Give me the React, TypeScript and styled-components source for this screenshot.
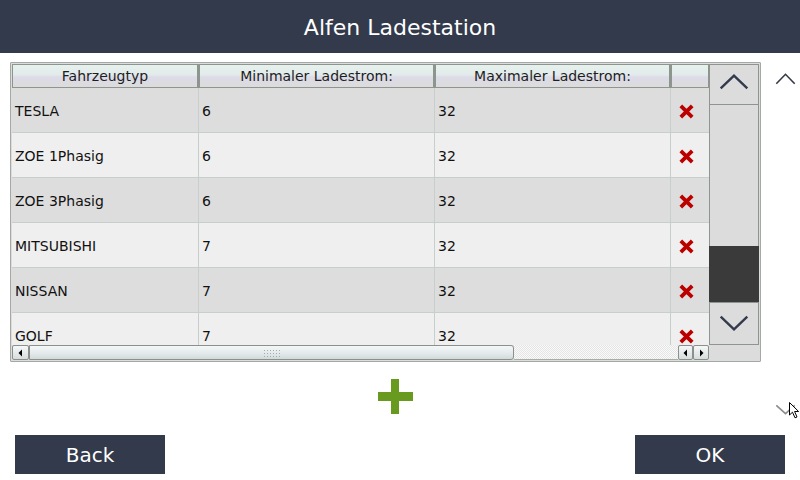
import styled, { createGlobalStyle } from 'styled-components';

type Vehicle = { name: string; min: number; max: number };

const vehicles: Vehicle[] = [
  { name: 'TESLA', min: 6, max: 32 },
  { name: 'ZOE 1Phasig', min: 6, max: 32 },
  { name: 'ZOE 3Phasig', min: 6, max: 32 },
  { name: 'MITSUBISHI', min: 7, max: 32 },
  { name: 'NISSAN', min: 7, max: 32 },
  { name: 'GOLF', min: 7, max: 32 },
];

const GlobalStyle = createGlobalStyle`
  html, body {
    margin: 0;
    padding: 0;
    width: 800px;
    height: 480px;
    overflow: hidden;
    background: #ffffff;
    font-family: 'DejaVu Sans', 'Liberation Sans', sans-serif;
  }
`;

const NAVY = '#323a4b';
const EDGE = '#8e948e';
const GRID_LINE = '#c6cfca';

function Cross() {
  return (
    <svg width="15" height="15" viewBox="0 0 15 15">
      <path d="M1.8 1.8 L13.2 13.2 M13.2 1.8 L1.8 13.2" stroke="#bb0000" strokeWidth="3.8" />
    </svg>
  );
}

function Chevron({ up, w, h, stroke, color }: { up?: boolean; w: number; h: number; stroke: number; color: string }) {
  const p = stroke / 2 + 0.5;
  const d = up
    ? `M${p} ${h - p} L${w / 2} ${p} L${w - p} ${h - p}`
    : `M${p} ${p} L${w / 2} ${h - p} L${w - p} ${p}`;
  return (
    <svg width={w} height={h} viewBox={`0 0 ${w} ${h}`}>
      <path d={d} fill="none" stroke={color} strokeWidth={stroke} />
    </svg>
  );
}

function Triangle({ left }: { left?: boolean }) {
  return (
    <svg width="5" height="8" viewBox="0 0 5 8">
      <path d={left ? 'M4 0.5 L0.5 4 L4 7.5 Z' : 'M1 0.5 L4.5 4 L1 7.5 Z'} fill="#000" />
    </svg>
  );
}

function Cursor() {
  return (
    <svg width="11" height="17" viewBox="0 0 11 17">
      <path d="M0.5 0.5 L0.5 13 L3.5 10.2 L6 15.8 L8 15 L5.6 9.5 L9.6 9.5 Z" fill="#fff" stroke="#000" strokeWidth="1" />
    </svg>
  );
}

export default function App() {
  return (
    <Page>
      <GlobalStyle />
      <TitleBar>Alfen Ladestation</TitleBar>

      <TableRow>
        <TableFrame>
          <DataArea>
            <HeaderRow>
              <HeaderCell>Fahrzeugtyp</HeaderCell>
              <HeaderCell>Minimaler Ladestrom:</HeaderCell>
              <HeaderCell>Maximaler Ladestrom:</HeaderCell>
              <HeaderCell />
            </HeaderRow>
            <Body>
              {vehicles.map((v, i) => (
                <Row key={v.name} $odd={i % 2 === 0}>
                  <Cell>{v.name}</Cell>
                  <Cell>{v.min}</Cell>
                  <Cell>{v.max}</Cell>
                  <ActionCell>
                    <Cross />
                  </ActionCell>
                </Row>
              ))}
            </Body>
            <HScroll>
              <ArrowButton $w={17}>
                <Triangle left />
              </ArrowButton>
              <HThumb>
                <Grip />
              </HThumb>
              <HTrack />
              <ArrowButton $w={15}>
                <Triangle left />
              </ArrowButton>
              <ArrowButton $w={16}>
                <Triangle />
              </ArrowButton>
            </HScroll>
          </DataArea>

          <VScroll>
            <VBar>
              <VButton $h={41}>
                <Chevron up w={30} h={16} stroke={2.4} color={NAVY} />
              </VButton>
              <VTrack>
                <VThumb />
              </VTrack>
              <VButton $h={43} $top>
                <Chevron w={30} h={16} stroke={2.4} color={NAVY} />
              </VButton>
            </VBar>
            <Corner />
          </VScroll>
        </TableFrame>

        <SideNav>
          <Chevron up w={21} h={12} stroke={1.6} color="#333a44" />
        </SideNav>
      </TableRow>

      <PlusRow>
        <PlusButton aria-label="add">
          <PlusV />
          <PlusH />
        </PlusButton>
        <DownNav>
          <Chevron w={21} h={11} stroke={1.6} color="#8c8c8c" />
          <CursorSpot>
            <Cursor />
          </CursorSpot>
        </DownNav>
      </PlusRow>

      <ButtonRow>
        <ActionButton>Back</ActionButton>
        <ActionButton>OK</ActionButton>
      </ButtonRow>
    </Page>
  );
}

const Page = styled.div`
  width: 800px;
  height: 480px;
  display: flex;
  flex-direction: column;
  overflow: hidden;
`;

const TitleBar = styled.header`
  height: 53px;
  flex-shrink: 0;
  background: ${NAVY};
  color: #ffffff;
  font-size: 22px;
  display: flex;
  align-items: center;
  justify-content: center;
  padding-top: 1px;
  box-sizing: border-box;
`;

const TableRow = styled.div`
  display: flex;
  align-items: flex-start;
  margin-top: 9px;
  padding-left: 10px;
  gap: 14px;
`;

const TableFrame = styled.div`
  display: flex;
  border: 1px solid #a3aaa4;
  padding: 1px;
  background: #dcdcdc;
  height: 300px;
  box-sizing: border-box;
  border-radius: 1px;
`;

const DataArea = styled.div`
  width: 697px;
  display: grid;
  grid-template-rows: 24px 257px 15px;
`;

const columns = '187px 236px 236px 38px';

const HeaderRow = styled.div`
  display: grid;
  grid-template-columns: ${columns};
`;

const HeaderCell = styled.div`
  box-sizing: border-box;
  border: 1px solid ${EDGE};
  border-right-width: 2px;
  background: linear-gradient(to bottom, #e6f1ed 0%, #e2ebea 45%, #dcdbe8 55%, #dcdcdc 100%);
  font-size: 14px;
  color: #1e1e1e;
  display: flex;
  align-items: center;
  justify-content: center;
  &:last-child {
    border-right-width: 1px;
  }
`;

const Body = styled.div`
  overflow: hidden;
`;

const Row = styled.div<{ $odd: boolean }>`
  display: grid;
  grid-template-columns: ${columns};
  height: 45px;
  background: ${(p) => (p.$odd ? '#dddddd' : '#efefef')};
  box-sizing: border-box;
  border-bottom: 1px solid ${GRID_LINE};
`;

const Cell = styled.div`
  display: flex;
  align-items: center;
  padding-left: 3px;
  padding-top: 1px;
  font-size: 14px;
  color: #111111;
  border-right: 1px solid ${GRID_LINE};
`;

const ActionCell = styled.div`
  display: flex;
  align-items: center;
  padding-left: 8px;
  padding-top: 2px;
`;

const HScroll = styled.div`
  display: flex;
  height: 15px;
  background: #dcdcdc;
`;

const ArrowButton = styled.div<{ $w: number }>`
  width: ${(p) => p.$w}px;
  box-sizing: border-box;
  border: 1px solid #8c8f8c;
  border-radius: 2px;
  background: linear-gradient(to bottom, #f6f8f8, #d6dcdc);
  display: flex;
  align-items: center;
  justify-content: center;
`;

const HThumb = styled.div`
  width: 485px;
  box-sizing: border-box;
  border: 1px solid #8c908c;
  border-radius: 0 3px 3px 0;
  background: linear-gradient(to bottom, #f4f7f8, #e2e9ea 60%, #d2d9da);
  display: flex;
  align-items: center;
  justify-content: center;
`;

const Grip = styled.div`
  width: 18px;
  height: 8px;
  background-image: radial-gradient(circle, #a8aca8 0.8px, transparent 1px);
  background-size: 3px 3px;
`;

const HTrack = styled.div`
  flex: 1;
  border-bottom: 1px solid #a8aca8;
  background-color: #f4f4f4;
  background-image: repeating-conic-gradient(#e4e4e4 0% 25%, #fafafa 0% 50%);
  background-size: 2px 2px;
`;

const VScroll = styled.div`
  width: 50px;
  display: flex;
  flex-direction: column;
`;

const VBar = styled.div`
  flex: 1;
  display: flex;
  flex-direction: column;
  border-left: 1px solid ${EDGE};
  border-right: 1px solid ${EDGE};
`;

const VButton = styled.div<{ $h: number; $top?: boolean }>`
  height: ${(p) => p.$h}px;
  flex-shrink: 0;
  box-sizing: border-box;
  border-top: 1px solid ${EDGE};
  border-bottom: 1px solid ${EDGE};
  background: #dcdcdc;
  display: flex;
  align-items: center;
  justify-content: center;
  padding-bottom: ${(p) => (p.$top ? 2 : 6)}px;
`;

const VTrack = styled.div`
  flex: 1;
  display: flex;
  flex-direction: column;
  justify-content: flex-end;
  background: #dcdcdc;
`;

const VThumb = styled.div`
  height: 56px;
  margin: 0 -1px;
  background: #3a3a3a;
`;

const Corner = styled.div`
  height: 15px;
  background: #dcdcdc;
`;

const SideNav = styled.div`
  padding-top: 11px;
  display: flex;
`;

const PlusRow = styled.div`
  position: relative;
  height: 35px;
  margin-top: 17px;
  display: flex;
  justify-content: center;
  padding-right: 10px;
`;

const PlusButton = styled.div`
  width: 35px;
  height: 35px;
  display: grid;
  place-items: center;
  position: relative;
`;

const PlusV = styled.div`
  grid-area: 1 / 1;
  width: 8px;
  height: 35px;
  background: #689a1f;
`;

const PlusH = styled.div`
  grid-area: 1 / 1;
  width: 35px;
  height: 9px;
  background: #689a1f;
`;

const DownNav = styled.div`
  position: absolute;
  right: 4px;
  top: 21px;
`;

const CursorSpot = styled.div`
  position: absolute;
  left: 14px;
  top: 2px;
`;

const ButtonRow = styled.div`
  display: flex;
  justify-content: space-between;
  padding: 0 15px;
  margin-top: 21px;
`;

const ActionButton = styled.button`
  width: 150px;
  height: 39px;
  border: none;
  background: ${NAVY};
  color: #ffffff;
  font-family: 'DejaVu Sans', 'Liberation Sans', sans-serif;
  font-size: 20px;
  padding: 0;
  display: flex;
  align-items: center;
  justify-content: center;
`;
